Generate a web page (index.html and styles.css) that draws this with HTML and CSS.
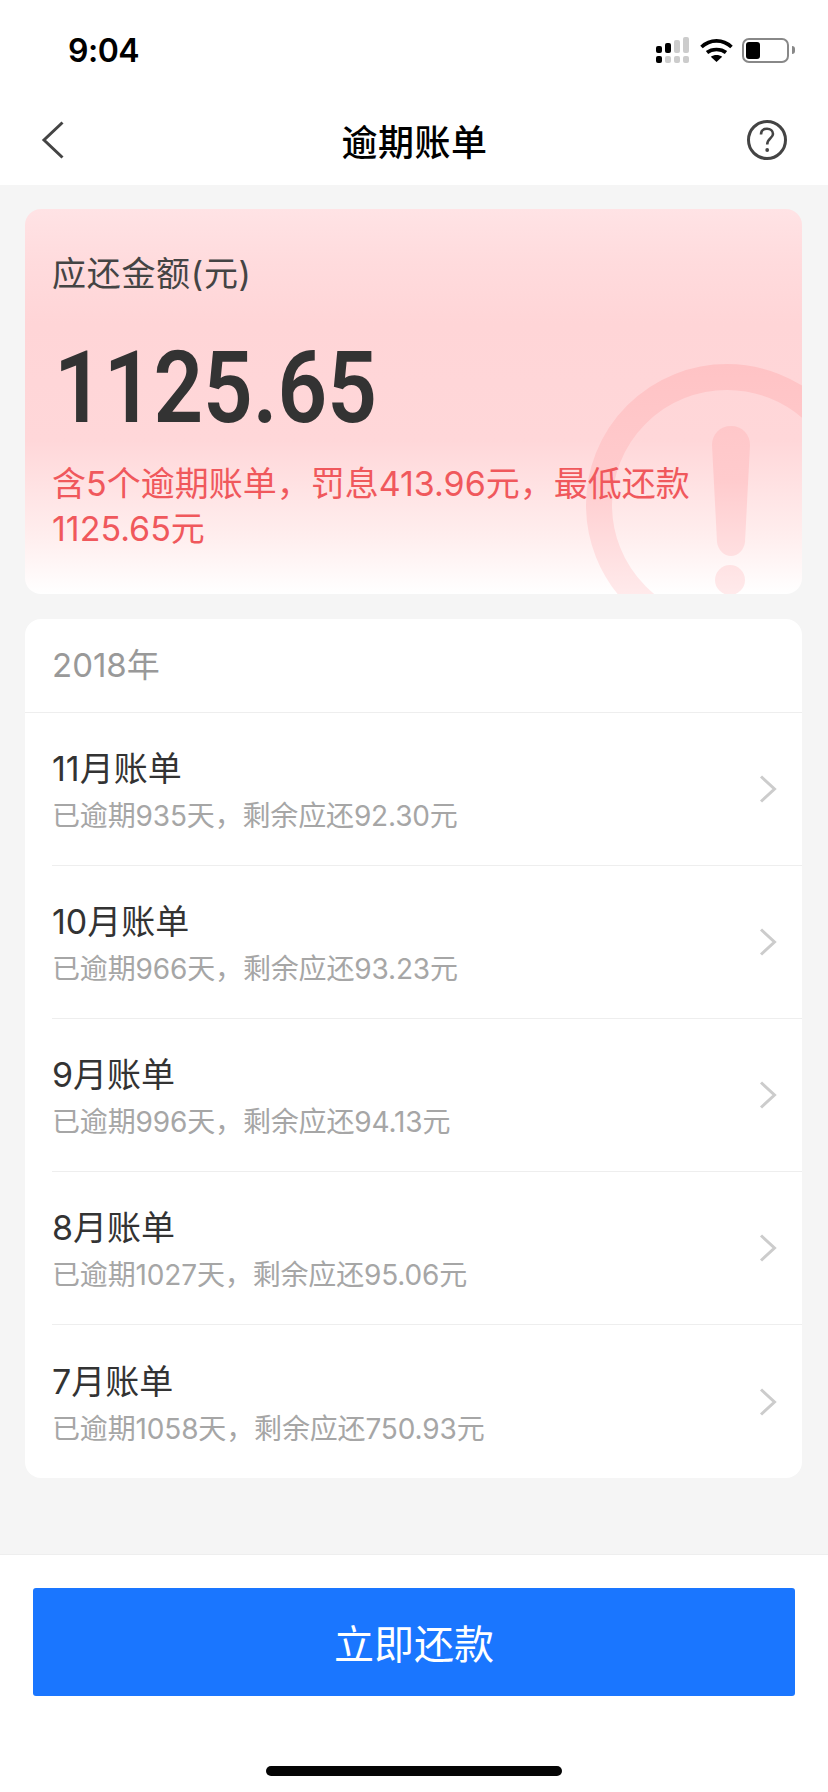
FILE: index.html
```html
<!DOCTYPE html>
<html lang="zh-CN">
<head>
    <meta charset="UTF-8">
    <meta name="viewport" content="width=device-width, initial-scale=1.0">
    <title>逾期账单</title>
    <link rel="stylesheet" href="styles.css">
</head>
<body>

<div class="page">
    <div class="status-bar">
        <span class="time">9:04</span>
        <div class="status-icons">
            <svg class="signal" width="33" height="26" viewBox="0 0 33 26">
                <rect x="0" y="9" width="6" height="7" rx="2" fill="#000"/>
                <rect x="9" y="6" width="6" height="10" rx="2" fill="#000"/>
                <rect x="18" y="3" width="6" height="13" rx="2" fill="#ccc"/>
                <rect x="27" y="0" width="6" height="16" rx="2" fill="#ccc"/>
                <rect x="0" y="19" width="6" height="7" rx="2" fill="#000"/>
                <rect x="9" y="19" width="6" height="7" rx="2" fill="#ccc"/>
                <rect x="18" y="19" width="6" height="7" rx="2" fill="#ccc"/>
                <rect x="27" y="19" width="6" height="7" rx="2" fill="#ccc"/>
            </svg>
            <svg class="wifi" width="33" height="24" viewBox="0 0 33 24">
                <path d="M1.5 9C10 .8 23 .8 31.5 9" fill="none" stroke="#000" stroke-width="3.6"/>
                <path d="M7 14.5C12 10.4 21 10.4 26 14.5" fill="none" stroke="#000" stroke-width="3.6"/>
                <path d="M16.5 24L10.8 18.8C14 16.4 19 16.4 22.2 18.8Z" fill="#000"/>
            </svg>
            <div class="battery">
                <div class="battery-level"></div>
            </div>
            <div class="battery-nub"></div>
        </div>
    </div>

    <div class="nav-bar">
        <svg class="nav-back" width="24" height="38" viewBox="0 0 24 38">
            <path d="M21.5 1.5L3 19L21.5 36.5" fill="none" stroke="#444" stroke-width="3"/>
        </svg>
        <h1 class="nav-title">逾期账单</h1>
        <svg class="nav-help" width="42" height="42" viewBox="0 0 42 42">
            <circle cx="21" cy="21" r="18.5" fill="none" stroke="#444" stroke-width="3"/>
            <path d="M15 15.5C15 11.5 17.6 9.8 21 9.8C24.4 9.8 27 11.8 27 15C27 19 21.2 19.6 21.2 25.5" fill="none" stroke="#444" stroke-width="2.6"/>
            <circle cx="21.2" cy="31" r="1.9" fill="#444"/>
        </svg>
    </div>

    <div class="content">
        <div class="due-card">
            <svg class="due-mark" width="216" height="230" viewBox="0 0 216 230">
                <defs>
                    <linearGradient id="markFade" gradientUnits="userSpaceOnUse" x1="0" y1="0" x2="0" y2="230">
                        <stop offset="0" stop-color="#ffc3c5"/>
                        <stop offset="0.5" stop-color="#ffcbcd"/>
                        <stop offset="1" stop-color="#ffeaeb"/>
                    </linearGradient>
                </defs>
                <circle cx="141" cy="141" r="128" fill="none" stroke="url(#markFade)" stroke-width="26"/>
                <path d="M145 62C156 62 164 70 164 81L159 178C158 186 152 192 145 192C138 192 132 186 131 178L126 81C126 70 134 62 145 62Z" fill="url(#markFade)"/>
                <circle cx="144" cy="216" r="15" fill="url(#markFade)"/>
            </svg>
            <div class="due-label">应还金额(元)</div>
            <div class="due-amount">1125.65</div>
            <div class="due-note">含5个逾期账单，罚息413.96元，最低还款<br>1125.65元</div>
        </div>

        <div class="bill-card">
            <div class="bill-year">2018年</div>
            <div class="bill-row">
                <div class="bill-text">
                    <div class="bill-title">11月账单</div>
                    <div class="bill-sub">已逾期935天，剩余应还92.30元</div>
                </div>
                <svg class="bill-arrow" width="18" height="28" viewBox="0 0 18 28"><path d="M2 1.5L15.5 14L2 26.5" fill="none" stroke="#ccc" stroke-width="3"/></svg>
            </div>
            <div class="bill-row">
                <div class="bill-text">
                    <div class="bill-title">10月账单</div>
                    <div class="bill-sub">已逾期966天，剩余应还93.23元</div>
                </div>
                <svg class="bill-arrow" width="18" height="28" viewBox="0 0 18 28"><path d="M2 1.5L15.5 14L2 26.5" fill="none" stroke="#ccc" stroke-width="3"/></svg>
            </div>
            <div class="bill-row">
                <div class="bill-text">
                    <div class="bill-title">9月账单</div>
                    <div class="bill-sub">已逾期996天，剩余应还94.13元</div>
                </div>
                <svg class="bill-arrow" width="18" height="28" viewBox="0 0 18 28"><path d="M2 1.5L15.5 14L2 26.5" fill="none" stroke="#ccc" stroke-width="3"/></svg>
            </div>
            <div class="bill-row">
                <div class="bill-text">
                    <div class="bill-title">8月账单</div>
                    <div class="bill-sub">已逾期1027天，剩余应还95.06元</div>
                </div>
                <svg class="bill-arrow" width="18" height="28" viewBox="0 0 18 28"><path d="M2 1.5L15.5 14L2 26.5" fill="none" stroke="#ccc" stroke-width="3"/></svg>
            </div>
            <div class="bill-row">
                <div class="bill-text">
                    <div class="bill-title">7月账单</div>
                    <div class="bill-sub">已逾期1058天，剩余应还750.93元</div>
                </div>
                <svg class="bill-arrow" width="18" height="28" viewBox="0 0 18 28"><path d="M2 1.5L15.5 14L2 26.5" fill="none" stroke="#ccc" stroke-width="3"/></svg>
            </div>
        </div>
    </div>

    <div class="footer">
        <button class="pay-btn">立即还款</button>
        <div class="home-bar"></div>
    </div>
</div>

</body>
</html>
```

FILE: styles.css
```css
* {
    box-sizing: border-box;
}
body {
    margin: 0;
    font-family: Inter, "Noto Sans CJK SC", sans-serif;
    background: #fff;
}
.page {
    display: flex;
    flex-direction: column;
    width: 828px;
    height: 1792px;
    overflow: hidden;
    background: #f5f5f5;
}

/* status bar */
.status-bar {
    display: flex;
    align-items: center;
    justify-content: space-between;
    height: 100px;
    padding: 0 33px 0 68px;
    background: #fff;
}
.time {
    font-size: 32px;
    font-weight: 600;
    letter-spacing: -0.5px;
    color: #000;
}
.status-icons {
    display: flex;
    align-items: center;
}
.signal {
    margin-right: 11px;
}
.wifi {
    margin-right: 9px;
}
.battery {
    width: 47px;
    height: 25px;
    padding: 2px;
    border: 2px solid #888;
    border-radius: 7px;
}
.battery-level {
    width: 14px;
    height: 17px;
    border-radius: 3px;
    background: #000;
}
.battery-nub {
    width: 3px;
    height: 8px;
    margin-left: 3px;
    border-radius: 0 3px 3px 0;
    background: #888;
}

/* nav */
.nav-bar {
    display: grid;
    grid-template-columns: 1fr auto 1fr;
    align-items: center;
    height: 85px;
    padding: 0 40px 5px 41px;
    background: #fff;
}
.nav-help {
    justify-self: end;
}
.nav-title {
    margin: 0;
    font-size: 36px;
    font-weight: 500;
    letter-spacing: 0.5px;
    color: #000;
}

/* content */
.content {
    flex: 1;
    padding: 24px 26px 0 25px;
}
.due-card {
    position: relative;
    height: 385px;
    padding: 41px 27px 0;
    overflow: hidden;
    border-radius: 16px;
    background: linear-gradient(#ffe3e5 0%, #ffdbdd 14%, #ffd5d7 30%, #ffd7d9 60%, #ffeeee 85%, #fff 100%);
}
.due-mark {
    position: absolute;
    right: 0;
    bottom: 0;
}
.due-label {
    position: relative;
    font-size: 34px;
    line-height: 48px;
    letter-spacing: 0.7px;
    color: #444;
}
.due-amount {
    position: relative;
    margin-top: 35px;
    margin-left: 2px;
    font-family: Roboto, sans-serif;
    font-size: 100px;
    font-weight: 600;
    line-height: 110px;
    color: #333;
    transform: scaleX(0.87);
    transform-origin: left;
}
.due-note {
    position: relative;
    margin-top: 18px;
    font-size: 34px;
    line-height: 45px;
    color: #f0585c;
}

.bill-card {
    margin-top: 25px;
    overflow: hidden;
    border-radius: 16px;
    background: #fff;
}
.bill-year {
    height: 94px;
    padding: 0 27px;
    border-bottom: 1px solid #eee;
    font-size: 33px;
    line-height: 92px;
    color: #999;
}
.bill-row {
    display: flex;
    align-items: center;
    justify-content: space-between;
    height: 153px;
    margin-left: 27px;
    padding-right: 25px;
    border-bottom: 1px solid #eee;
}
.bill-row:last-child {
    border-bottom: 0;
}
.bill-text {
    padding-top: 3px;
}
.bill-title {
    font-size: 34px;
    line-height: 44px;
    color: #333;
}
.bill-sub {
    margin-top: 7px;
    font-size: 28px;
    line-height: 36px;
    letter-spacing: -0.15px;
    color: #a6a6a6;
}

/* footer */
.footer {
    display: flex;
    flex-direction: column;
    align-items: center;
    height: 238px;
    padding-top: 33px;
    border-top: 1px solid #eee;
    background: #fff;
}
.pay-btn {
    width: 762px;
    height: 108px;
    border: 0;
    border-radius: 3px;
    font-family: inherit;
    font-size: 40px;
    color: #fff;
    background: #1a76ff;
}
.home-bar {
    width: 296px;
    height: 10px;
    margin-top: 70px;
    border-radius: 5px;
    background: #050505;
}
```
